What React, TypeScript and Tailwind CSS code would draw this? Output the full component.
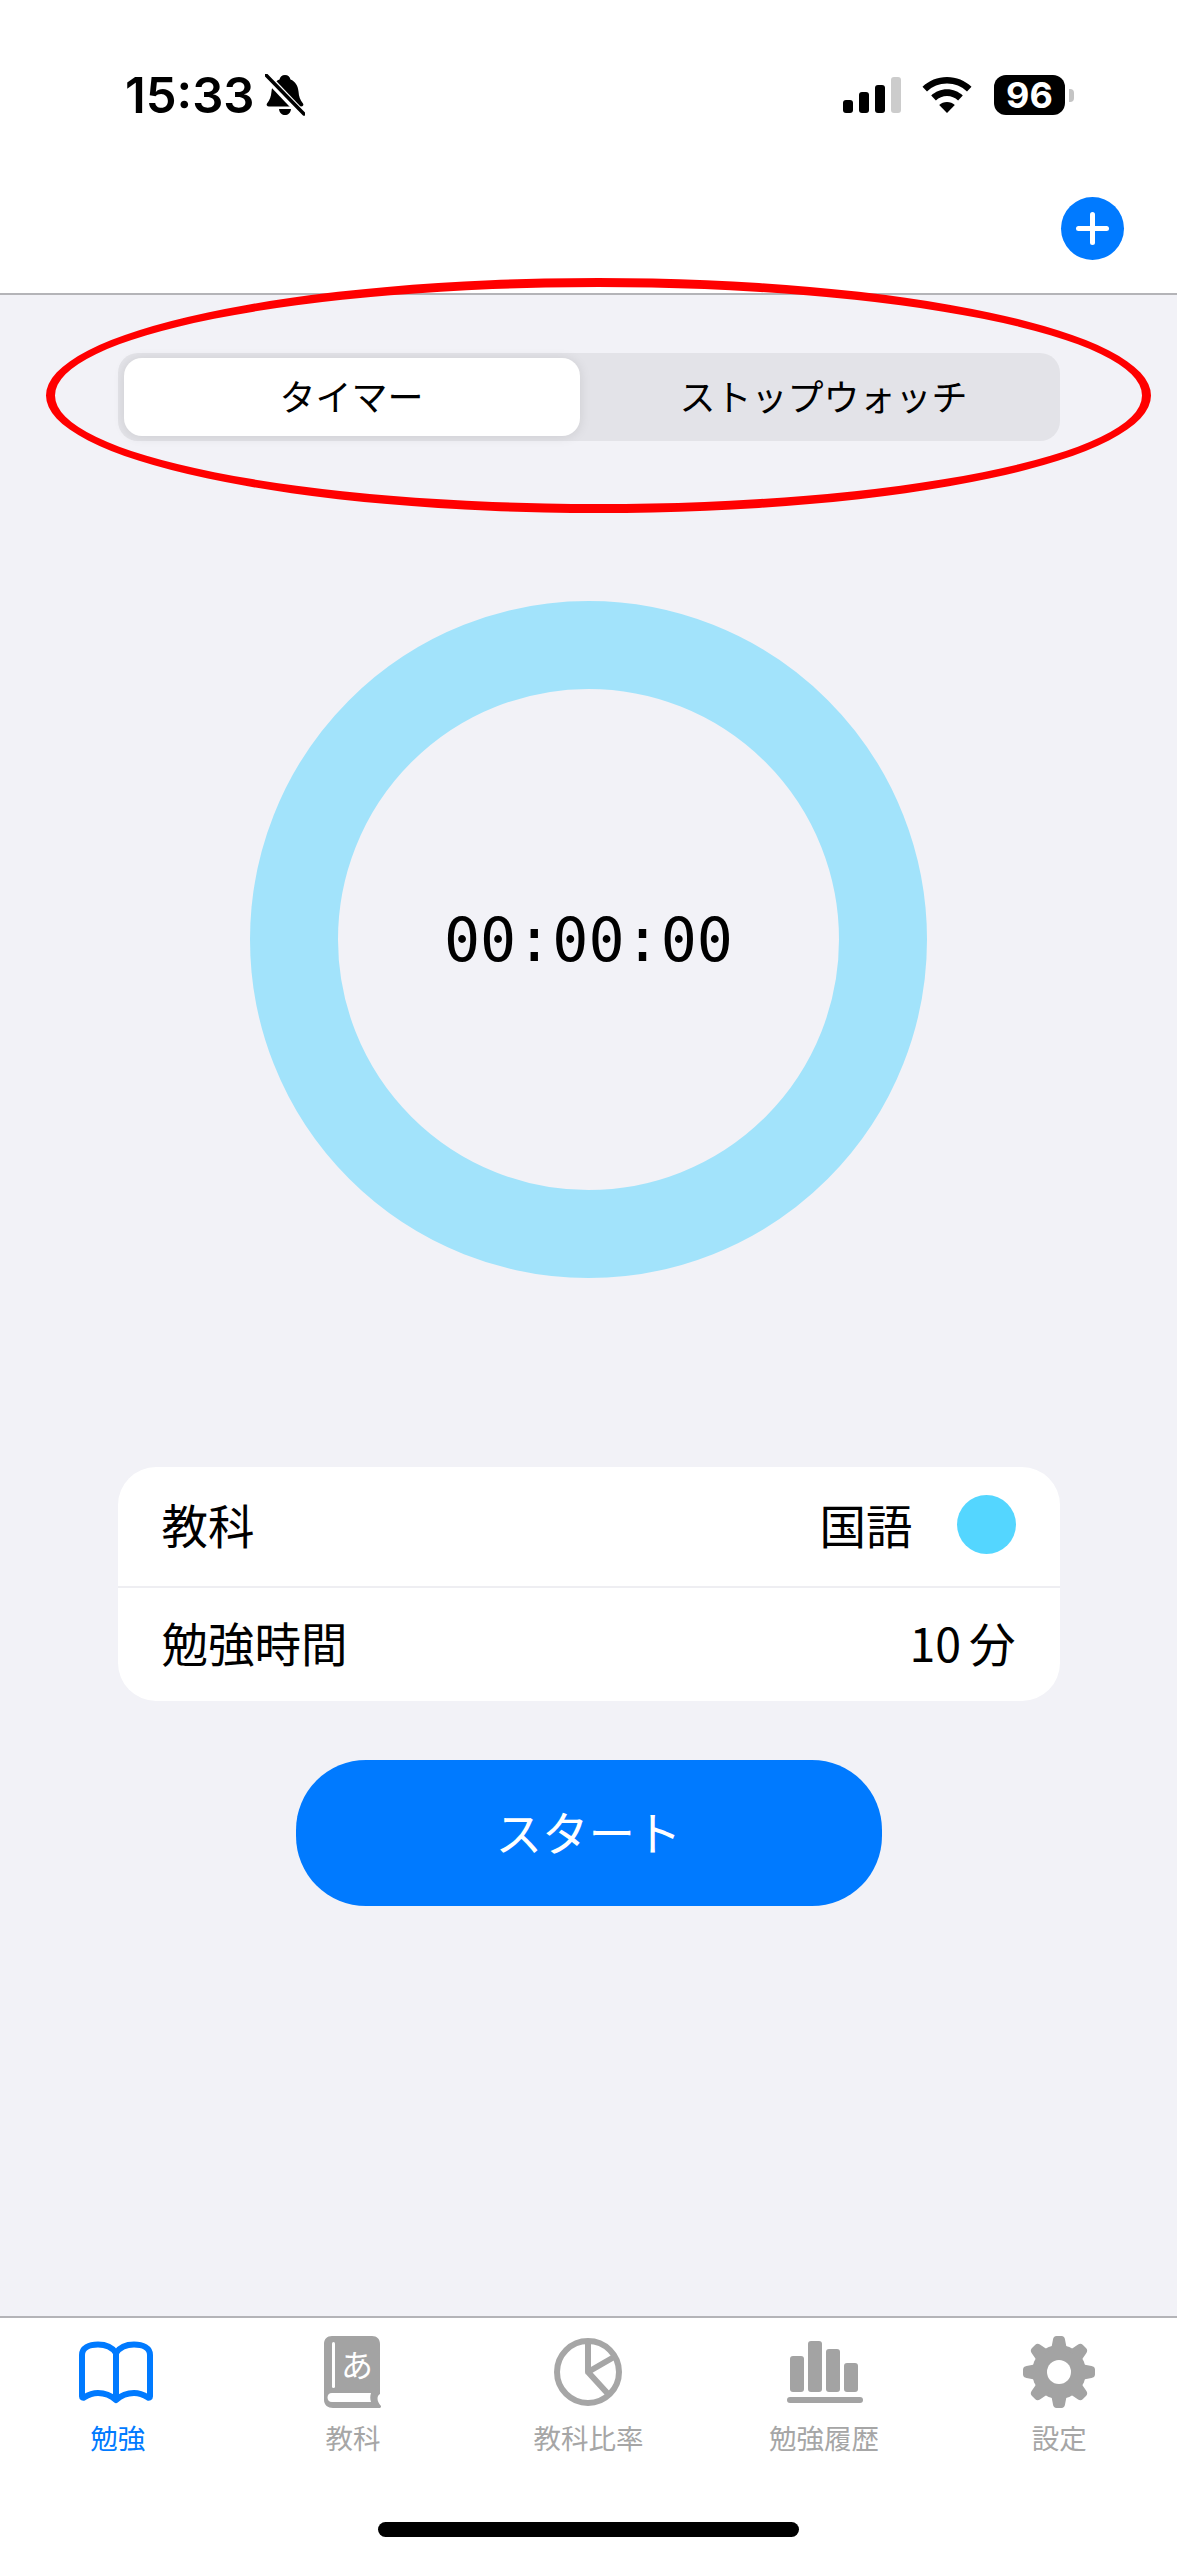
const CJK = "font-['Noto_Sans_CJK_JP','Noto_Sans',sans-serif]";

function BellSlash() {
  return (
    <svg width="40" height="42" viewBox="0 0 40 42" className="ml-[10px]">
      <path
        d="M20 1c3 0 5 2 5.500 4.500 5 2 7.500 6.500 8 12 .4 5 1.500 8.500 4.500 12 1 1.500 0 3-2 3H4c-2 0-3-1.500-2-3 3-3.500 4-7 4.500-12 .5-5.500 3-10 8-12C15 3 17 1 20 1z"
        fill="#000"
      />
      <path d="M14 35h12c-.5 4-3 6-6 6s-5.500-2-6-6z" fill="#000" />
      <path d="M0 1l38 40" stroke="#fff" strokeWidth="8" />
      <path d="M1 1l38 39" stroke="#000" strokeWidth="3.500" strokeLinecap="round" />
    </svg>
  );
}

function SignalBars() {
  return (
    <div className="flex items-end gap-[6px] h-[36px]">
      <div className="w-[10px] h-[13px] rounded-[3px] bg-black" />
      <div className="w-[10px] h-[21px] rounded-[3px] bg-black" />
      <div className="w-[10px] h-[28px] rounded-[3px] bg-black" />
      <div className="w-[10px] h-[36px] rounded-[3px] bg-[#cccccc]" />
    </div>
  );
}

function Wifi() {
  return (
    <svg width="50" height="36" viewBox="0 0 50 36">
      <path
        d="M25 0C15.500 0 7 3.700.500 9.700L5 14.500C10.300 9.500 17.300 6.600 25 6.600s14.700 2.900 20 7.900l4.500-4.800C43 3.700 34.500 0 25 0z"
        fill="#000"
      />
      <path
        d="M25 12.300c-6.100 0-11.600 2.400-15.800 6.200l4.700 4.900c3-2.700 6.900-4.300 11.100-4.300s8.100 1.600 11.100 4.300l4.700-4.900c-4.200-3.800-9.700-6.200-15.800-6.200z"
        fill="#000"
      />
      <path d="M25 25c-3 0-5.800 1.100-7.800 3L25 36l7.800-8c-2-1.900-4.800-3-7.800-3z" fill="#000" />
    </svg>
  );
}

function Battery() {
  return (
    <div className="flex items-center gap-[4px]">
      <div className="flex h-[40px] w-[71px] items-center justify-center rounded-[12px] bg-black font-['Inter',sans-serif] text-[36px] leading-none font-bold text-white">
        96
      </div>
      <div className="h-[13px] w-[5px] rounded-r-[4px] bg-[#c4c4c4]" />
    </div>
  );
}

function BookIcon() {
  return (
    <svg width="76" height="63" viewBox="0 0 76 63" fill="none" stroke="#007aff" strokeWidth="6" strokeLinejoin="round" strokeLinecap="round" className="-ml-[3px]">
      <path d="M38 12C34 6 28 3.500 20 3.500 11 3.500 4 7 4 14v41.500c0 1 1 1.500 2 1 4-2.500 9-4.500 14-4.500 7 0 13 2.500 18 7 5-4.500 11-7 18-7 5 0 10 2 14 4.500 1 .5 2 0 2-1V14c0-7-7-10.500-16-10.500-8 0-14 2.500-18 8.500z" />
      <path d="M38 12v46" />
    </svg>
  );
}

function DictIcon() {
  return (
    <svg width="57" height="72" viewBox="0 0 57 72" className="-ml-[1px]">
      <path
        d="M8 0h40c5 0 8 3 8 8v50c-3 1.500-4 6.500 1 12 .5 1-.5 2-2 2H9c-5 0-9-3-9-8V8c0-5 3-8 8-8z"
        fill="#a3a3a3"
      />
      <rect x="8" y="6" width="3" height="46" rx="1.500" fill="#fff" />
      <path d="M8 57h39c-1 3-1 6 0 9H8c-3 0-4.500-2-4.500-4.500S5 57 8 57z" fill="#fff" />
      <text x="33" y="41" textAnchor="middle" fontSize="32" fill="#fff" fontFamily="'Noto Sans CJK JP',sans-serif">
        あ
      </text>
    </svg>
  );
}

function PieIcon() {
  return (
    <svg width="68" height="68" viewBox="0 0 68 68" fill="none" stroke="#a6a6a6" strokeWidth="6" strokeLinejoin="round" className="-ml-[1px]">
      <circle cx="34" cy="34" r="31" />
      <path d="M34 3v31l26-15M34 34l21 23" />
    </svg>
  );
}

function BarsIcon() {
  return (
    <svg width="76" height="62" viewBox="0 0 76 62" fill="#a3a3a3" className="ml-[2px]">
      <rect x="3" y="15" width="14" height="36" rx="3" />
      <rect x="21" y="0" width="14" height="51" rx="3" />
      <rect x="39" y="8" width="14" height="43" rx="3" />
      <rect x="57" y="22" width="14" height="29" rx="3" />
      <rect x="0" y="56" width="76" height="6" rx="3" />
    </svg>
  );
}

function GearIcon() {
  const teeth = [0, 45, 90, 135, 180, 225, 270, 315];
  return (
    <svg width="72" height="72" viewBox="0 0 72 72" className="-ml-[1px]">
      <circle cx="36" cy="36" r="27" fill="#a3a3a3" />
      {teeth.map((deg) => (
        <path
          key={deg}
          d="M28 14L30 3.500C30.300 1.500 31.500 0 33.500 0h5c2 0 3.200 1.500 3.500 3.500L44 14z"
          fill="#a3a3a3"
          transform={`rotate(${deg} 36 36)`}
        />
      ))}
      <circle cx="36" cy="36" r="12" fill="#fff" />
    </svg>
  );
}

const tabs = [
  { label: "勉強", icon: <BookIcon />, active: true },
  { label: "教科", icon: <DictIcon /> },
  { label: "教科比率", icon: <PieIcon /> },
  { label: "勉強履歴", icon: <BarsIcon /> },
  { label: "設定", icon: <GearIcon /> },
];

export default function App() {
  return (
    <div className={`relative flex h-[2560px] w-full flex-col bg-[#f2f2f7] ${CJK}`}>
      <header className="h-[295px] shrink-0 border-b-2 border-[#b4b4b8] bg-white">
        <div className="flex h-[190px] items-center justify-between pr-[103px] pl-[125px]">
          <div className="flex items-center">
            <span className="font-['Inter',sans-serif] text-[49px] leading-none font-semibold text-black">15:33</span>
            <BellSlash />
          </div>
          <div className="flex items-center">
            <SignalBars />
            <div className="mr-[22px] ml-[21px]">
              <Wifi />
            </div>
            <Battery />
          </div>
        </div>
        <div className="flex justify-end pt-[7px] pr-[53px]">
          <div className="relative size-[63px] rounded-full bg-[#007aff]">
            <div className="absolute top-[15px] left-[29px] h-[33px] w-[5px] rounded-full bg-white" />
            <div className="absolute top-[29px] left-[15px] h-[5px] w-[33px] rounded-full bg-white" />
          </div>
        </div>
      </header>

      <main className="flex flex-1 flex-col items-center pt-[58px]">
        <div className="flex h-[88px] w-[942px] items-center rounded-[20px] bg-[#e3e3e8] p-[6px]">
          <div className="flex h-[78px] w-[456px] items-center justify-center rounded-[18px] bg-white pb-[4px] text-[36px] text-black shadow-[0_1px_12px_rgba(0,0,0,0.1)]">
            タイマー
          </div>
          <div className="flex flex-1 items-center justify-center pb-[4px] pl-[14px] text-[36px] text-black">
            ストップウォッチ
          </div>
        </div>

        <div className="mt-[160px] flex size-[677px] items-center justify-center rounded-full border-[88px] border-[#a2e3fb]">
          <span className="font-['DejaVu_Sans_Mono',monospace] text-[60px] leading-none text-black">00:00:00</span>
        </div>

        <div className="mt-[189px] w-[942px] rounded-[38px] bg-white text-[46.500px] leading-none text-black">
          <div className="flex h-[119px] items-center justify-between px-[44px] pb-[4px]">
            <span>教科</span>
            <div className="flex items-center gap-[44px]">
              <span>国語</span>
              <div className="size-[59px] rounded-full bg-[#54d6ff]" />
            </div>
          </div>
          <div className="h-[2px] bg-[#eeeef2]" />
          <div className="flex h-[113px] items-center justify-between px-[44px] pb-[4px]">
            <span>勉強時間</span>
            <span>
              10<span className="ml-[8px]">分</span>
            </span>
          </div>
        </div>

        <button className="mt-[59px] flex h-[146px] w-[586px] items-center justify-center rounded-[70px] bg-[#007aff] pb-[4px] text-[46.500px] text-white">
          スタート
        </button>
      </main>

      <nav className="flex h-[244px] shrink-0 flex-col justify-between border-t-2 border-[#b4b4b8] bg-white">
        <div className="grid grid-cols-5 pt-[18px]">
          {tabs.map((tab) => (
            <div key={tab.label} className="flex flex-col items-center">
              <div className="flex h-[72px] items-center justify-center">{tab.icon}</div>
              <span className={`mt-[16px] text-[27.500px] leading-none ${tab.active ? "text-[#007aff]" : "text-[#a6a6a6]"}`}>
                {tab.label}
              </span>
            </div>
          ))}
        </div>
        <div className="mb-[23px] h-[15px] w-[421px] self-center rounded-full bg-black" />
      </nav>

      {/* red marker drawn on the screenshot */}
      <div className="pointer-events-none absolute top-[278px] left-[46px] h-[235px] w-[1105px] rounded-[50%] border-[9px] border-[#ff0000]" />
    </div>
  );
}
